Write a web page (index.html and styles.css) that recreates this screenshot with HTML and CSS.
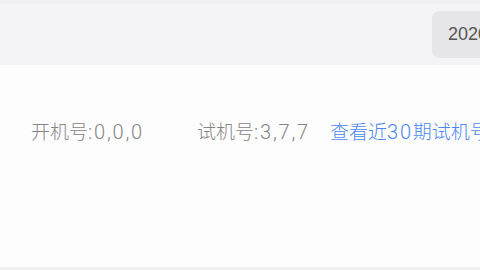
FILE: index.html
```html
<!DOCTYPE html>
<html>
<head>
    <meta charset="utf-8">
    <link rel="stylesheet" href="styles.css">
</head>
<body>
    <div class="page">
        <div class="top-bar">
            <button class="date-btn">2020-06-18</button>
        </div>

        <div class="draw-box">
            <div class="draw-row">
                <span class="draw-item open">开机号<span class="num">:0,0,0</span></span>
                <span class="draw-item test">试机号<span class="num">:3,7,7</span></span>
                <a class="history-link" href="#">查看近<span class="num">30</span>期试机号</a>
            </div>
        </div>

        <div class="bottom-line"></div>
    </div>
</body>
</html>
```

FILE: styles.css
```css
body {
    margin: 0;
    font-family: "Noto Sans CJK SC", sans-serif;
    background-color: #f0f0f3;
    overflow: hidden;
}

.page {
    width: 480px;
    height: 270px;
    display: flex;
    flex-direction: column;
    padding-top: 4px;
    box-sizing: border-box;
}

.top-bar {
    height: 61px;
    background-color: #f4f4f8;
    display: flex;
    align-items: center;
    padding-left: 432px;
    box-sizing: border-box;
    overflow: hidden;
}

.date-btn {
    flex-shrink: 0;
    height: 47px;
    padding: 0 16px;
    border: none;
    border-radius: 8px;
    background-color: #e6e6e8;
    color: #555555;
    font-family: "Liberation Sans", sans-serif;
    font-size: 18px;
    white-space: nowrap;
}

.draw-box {
    flex: 1;
    background-color: #fdfdfd;
    padding-left: 31px;
    padding-top: 53px;
    overflow: hidden;
}

.draw-row {
    display: flex;
    align-items: baseline;
    white-space: nowrap;
    font-size: 19px;
    font-weight: 300;
    line-height: 26px;
}

.num {
    font-family: Roboto, "Liberation Sans", sans-serif;
    font-size: 20px;
    font-weight: 300;
    letter-spacing: 1.8px;
}

.draw-item {
    color: #858585;
    flex-shrink: 0;
}

.draw-item.open {
    width: 166px;
}

.draw-item.test {
    width: 133px;
}

.history-link {
    color: #4b88ec;
    text-decoration: none;
    flex-shrink: 0;
}

.bottom-line {
    height: 3px;
    background-color: #f0f0f0;
}
```
